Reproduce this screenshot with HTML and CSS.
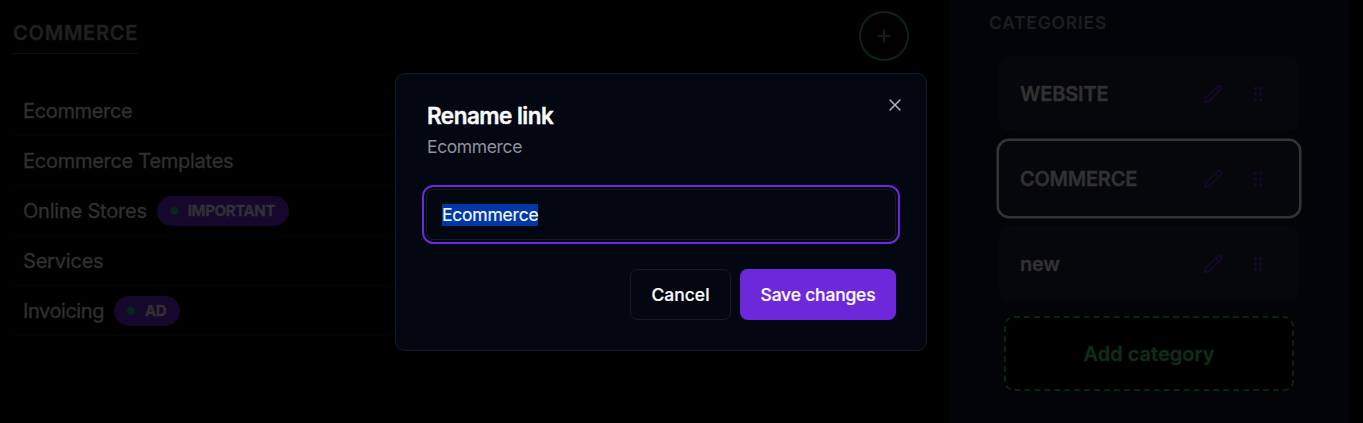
FILE: index.html
```html
<!DOCTYPE html>
<html lang="en">
<head>
<meta charset="utf-8">
<title>Rename link</title>
<link rel="stylesheet" href="styles.css">
</head>
<body>
<svg class="sprite" aria-hidden="true">
  <symbol id="pencil" viewBox="0 0 24 24"><path d="M17 3a2.85 2.83 0 1 1 4 4L7.500 20.500 2 22l1.500-5.500Z"/><path d="m15 5 4 4"/></symbol>
  <symbol id="grip" viewBox="0 0 24 24"><circle cx="9" cy="12" r="1"/><circle cx="9" cy="5" r="1"/><circle cx="9" cy="19" r="1"/><circle cx="15" cy="12" r="1"/><circle cx="15" cy="5" r="1"/><circle cx="15" cy="19" r="1"/></symbol>
  <symbol id="plus" viewBox="0 0 24 24"><path d="M5 12h14M12 5v14"/></symbol>
  <symbol id="close" viewBox="0 0 24 24"><path d="M18 6 6 18M6 6l12 12"/></symbol>
</svg>
<div class="page">
  <main class="links">
    <header class="links-head">
      <h2 class="heading"><span class="t-heading">COMMERCE</span></h2>
      <button class="add-link"><svg class="icon"><use href="#plus"/></svg></button>
    </header>
    <ul class="list">
      <li class="row"><span class="t-eco">Ecommerce</span></li>
      <li class="row"><span class="t-templates">Ecommerce Templates</span></li>
      <li class="row"><span class="t-stores">Online Stores</span><span class="tag tag-important"><i class="dot"></i><b class="t-important">IMPORTANT</b></span></li>
      <li class="row"><span class="t-services">Services</span></li>
      <li class="row"><span class="t-invoicing">Invoicing</span><span class="tag tag-ad"><i class="dot"></i><b class="t-ad">AD</b></span></li>
    </ul>
  </main>
  <aside class="sidebar">
    <h3 class="side-title"><span class="t-categories">CATEGORIES</span></h3>
    <div class="cards">
      <div class="card"><span class="name t-website">WEBSITE</span><svg class="icon"><use href="#pencil"/></svg><svg class="icon grip"><use href="#grip"/></svg></div>
      <div class="card active"><span class="name t-commerce">COMMERCE</span><svg class="icon"><use href="#pencil"/></svg><svg class="icon grip"><use href="#grip"/></svg></div>
      <div class="card"><span class="name t-new">new</span><svg class="icon"><use href="#pencil"/></svg><svg class="icon grip"><use href="#grip"/></svg></div>
    </div>
    <button class="add-category"><span class="t-add">Add category</span></button>
  </aside>
</div>
<div class="dialog" role="dialog">
  <button class="close"><svg class="icon"><use href="#close"/></svg></button>
  <h1 class="title"><span class="t-title">Rename link</span></h1>
  <p class="desc"><span class="t-desc">Ecommerce</span></p>
  <div class="field"><span class="selected t-input">Ecommerce</span></div>
  <div class="actions">
    <button class="btn cancel"><span class="t-cancel">Cancel</span></button>
    <button class="btn save"><span class="t-save">Save changes</span></button>
  </div>
</div>
</body>
</html>
```
FILE: styles.css
```css
* { box-sizing: border-box; margin: 0; padding: 0; }
body { background: #000; font-family: Inter, "Liberation Sans", sans-serif; overflow: hidden; height: 423px; }
button { font: inherit; background: none; border: 0; display: flex; align-items: center; justify-content: center; }
span { white-space: nowrap; }
.sprite { display: none; }
.icon { width: 20px; height: 20px; fill: none; stroke: currentColor; stroke-width: 2; stroke-linecap: round; stroke-linejoin: round; flex: none; }
.page { display: flex; height: 423px; }

.links { width: 949px; padding: 11px 40px 0 13px; }
.links-head { display: flex; justify-content: space-between; height: 75px; }
.heading { font-size: 20px; font-weight: 600; line-height: 28px; height: 43px; width: 125px; padding-top: 8px; border-bottom: 1px solid #0f0f11; color: #202022; -webkit-text-stroke: 0.3px currentColor; }
.add-link { width: 50px; height: 50px; border: 2px solid #0a2614; border-radius: 50%; color: #0d2b18; background: #010102; }
.list { list-style: none; }
.row { display: flex; align-items: center; gap: 10px; height: 50px; padding: 0 10px; border-bottom: 1px solid #050506; font-size: 20px; color: #303030; -webkit-text-stroke: 0.35px currentColor; }
.tag { display: flex; align-items: center; gap: 10px; height: 30px; border-radius: 15px; background: #16082c; padding-left: 13px; }
.tag-important { width: 132px; }
.tag-ad { width: 66px; }
.dot { width: 8px; height: 8px; border-radius: 50%; background: #03281a; }
.tag b { font-size: 15px; font-weight: 700; color: #313033; }

.sidebar { width: 400px; background: #030408; padding: 12px 50px 0; }
.side-title { font-size: 17.500px; line-height: 22px; font-weight: 600; color: #1d1e20; margin-left: -10px; height: 44px; }
.cards { display: flex; flex-direction: column; gap: 10px; }
.card { height: 75px; border-radius: 10px; background: #06070a; display: flex; align-items: center; padding: 0 31px 0 21px; color: #170829; }
.card.active { box-shadow: 0 0 0 2.500px #343434; }
.name { flex: 1; font-size: 20px; font-weight: 600; color: #313131; -webkit-text-stroke: 0.4px currentColor; }
.grip { margin-left: 25px; }
.add-category { width: 290px; height: 75px; margin: 15px 0 0 5px; border: 2px dashed #08260f; border-radius: 10px; background: #000; color: #0e2d1a; font-size: 20px; font-weight: 600; -webkit-text-stroke: 0.3px currentColor; }

.dialog { position: absolute; left: 395px; top: 73px; width: 532px; height: 278px; border: 1px solid #161b26; border-radius: 10px; background: #030711; padding: 30px 30px 0 31px; }
.close { position: absolute; right: 21px; top: 21px; color: #b3b4b8; }
.close .icon { stroke-width: 1.800; }
.title { font-size: 22.500px; line-height: 24px; font-weight: 600; color: #f9fafb; -webkit-text-stroke: 0.4px currentColor; }
.desc { font-size: 17.500px; line-height: 24px; color: #8c919c; margin-top: 7px; }
.field { height: 51px; margin: 30px 0 0 -1px; border: 1px solid #161b26; border-radius: 7.500px; display: flex; align-items: center; padding-left: 15px; outline: 2.500px solid #6d28d9; outline-offset: 2.500px; }
.selected { font-size: 17.500px; line-height: 22px; height: 22px; background: #0038a5; color: #f4f6fb; -webkit-text-stroke: 0.2px currentColor; }
.actions { display: flex; justify-content: flex-end; gap: 9px; margin-top: 29px; }
.btn { height: 51px; border-radius: 7.500px; font-size: 17.500px; font-weight: 500; color: #f9fafb; -webkit-text-stroke: 0.2px currentColor; }
.cancel { width: 101px; border: 1px solid #161b26; }
.save { width: 156px; background: #6d28d9; }

.t-heading { letter-spacing: 0.780px; }
.t-categories { letter-spacing: 0.720px; }
.t-eco { letter-spacing: -0.350px; }
.t-templates { letter-spacing: -0.270px; }
.t-stores { letter-spacing: -0.210px; }
.t-services { letter-spacing: -0.200px; }
.t-invoicing { letter-spacing: -0.440px; }
.t-important { letter-spacing: -0.370px; }
.t-ad { letter-spacing: -0.400px; }
.t-website { letter-spacing: -0.150px; }
.t-commerce { letter-spacing: -0.250px; }
.t-new { letter-spacing: -0.200px; }
.t-title { letter-spacing: -0.520px; }
.t-desc { letter-spacing: -0.380px; }
.t-input { letter-spacing: -0.220px; }
.t-save { letter-spacing: -0.200px; }
```
